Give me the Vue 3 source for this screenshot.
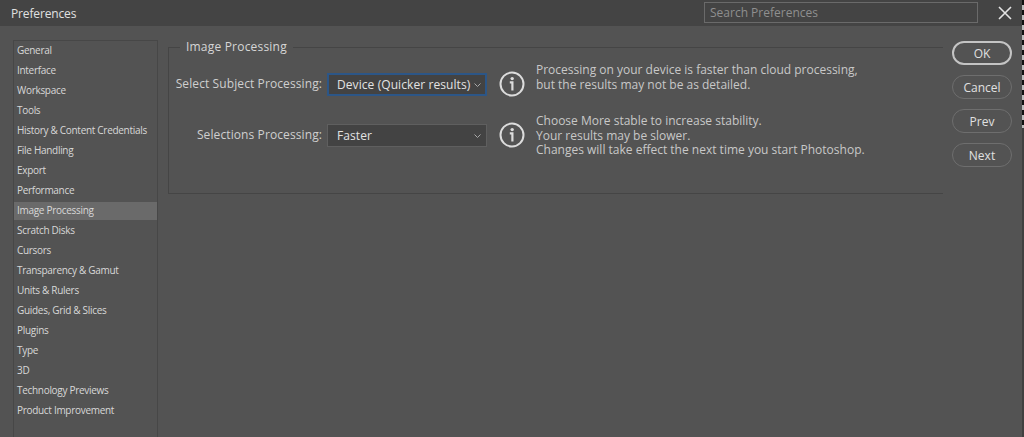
<script setup>
const items = ['General','Interface','Workspace','Tools','History & Content Credentials','File Handling','Export','Performance','Image Processing','Scratch Disks','Cursors','Transparency & Gamut','Units & Rulers','Guides, Grid & Slices','Plugins','Type','3D','Technology Previews','Product Improvement']
const rows = [
  { label: 'Select Subject Processing:', value: 'Device (Quicker results)', focused: true, lines: ['Processing on your device is faster than cloud processing,', 'but the results may not be as detailed.'] },
  { label: 'Selections Processing:', value: 'Faster', focused: false, lines: ['Choose More stable to increase stability.', 'Your results may be slower.', 'Changes will take effect the next time you start Photoshop.'] }
]
const buttons = ['OK','Cancel','Prev','Next']
</script>

<template>
  <div class="dialog">
    <header class="titlebar">
      <span class="title">Preferences</span>
      <div class="search">Search Preferences</div>
      <svg class="close" width="14" height="14" viewBox="0 0 14 14"><path d="M1 1 13 13M13 1 1 13" stroke="#e4e4e4" stroke-width="1.6" fill="none"/></svg>
    </header>
    <main class="body">
      <nav class="nav">
        <div v-for="it in items" :key="it" class="nav-item" :class="{ active: it === 'Image Processing' }">{{ it }}</div>
      </nav>
      <section class="content">
        <div class="group">
          <span class="legend">Image Processing</span>
          <div v-for="(r, i) in rows" :key="r.label" class="row" :class="'row' + i">
            <div class="label">{{ r.label }}</div>
            <div class="select" :class="{ focused: r.focused }">
              <span>{{ r.value }}</span>
              <svg class="chev" width="7" height="4" viewBox="0 0 7 4"><path d="M.5.5 3.5 3.5 6.5.5" stroke="#a8a8a8" fill="none"/></svg>
            </div>
            <svg class="info" width="26" height="26" viewBox="0 0 26 26">
              <circle cx="13" cy="13" r="11.5" stroke="#dcdcdc" stroke-width="2" fill="none"/>
              <circle cx="13.2" cy="7.6" r="1.7" fill="#dcdcdc"/>
              <path d="M10.8 11.3H13.4V19.5" stroke="#dcdcdc" stroke-width="2.2" fill="none"/>
            </svg>
            <div class="help"><div v-for="l in r.lines" :key="l">{{ l }}</div></div>
          </div>
        </div>
      </section>
      <aside class="actions">
        <button v-for="(b, i) in buttons" :key="b" class="btn" :class="{ primary: i === 0 }">{{ b }}</button>
      </aside>
    </main>
    <div class="edge"></div>
  </div>
</template>

<style>
html, body { margin: 0; background: #535353; }
</style>

<style scoped>
.dialog { position: relative; width: 1024px; height: 437px; background: #535353; overflow: hidden; font-family: "Open Sans", "DejaVu Sans", sans-serif; color: #d6d6d6; display: flex; flex-direction: column; }
.edge { position: absolute; top: 0; right: 0; bottom: 0; width: 2px; background: repeating-linear-gradient(to bottom, #111 0 5px, #bdbdbd 5px 10px) top / 2px 128px no-repeat, #404040; }
.titlebar { height: 26px; background: #444444; display: flex; align-items: center; padding-left: 11px; box-sizing: border-box; }
.title { font-size: 12px; letter-spacing: -0.15px; color: #e0e0e0; flex: 1; }
.search { width: 274px; height: 21px; margin-top: -2px; border: 1px solid #6a6a6a; color: #8f8f8f; font-size: 12px; line-height: 20px; padding-left: 5px; box-sizing: border-box; }
.close { margin-left: 20px; margin-right: 12px; }
.body { flex: 1; display: flex; min-height: 0; padding-top: 14px; }
.nav { width: 145px; margin-left: 13px; border: 1px solid #474747; border-bottom: 0; padding-top: 0; flex: none; box-sizing: border-box; margin-right: 10px; }
.nav-item { height: 20px; line-height: 18px; font-size: 10px; letter-spacing: -0.3px; padding-left: 3px; color: #d8d8d8; }
.nav-item.active { background: #6a6a6a; height: 18px; margin: 1px 0; line-height: 16px; }
.content { width: 775px; flex: none; padding-top: 7px; }
.group { position: relative; height: 147px; border: 1px solid #454545; border-right: 0; box-sizing: border-box; }
.legend { position: absolute; left: 11px; top: -9px; background: #535353; padding: 0 6px; font-size: 12px; letter-spacing: 0.2px; line-height: 16px; color: #d6d6d6; }
.row { display: flex; position: absolute; left: 0; right: 0; align-items: flex-start; }
.row0 { top: 25px; }
.row1 { top: 76px; }
.label { width: 153px; text-align: right; font-size: 12px; letter-spacing: 0.1px; line-height: 22px; color: #cfcfcf; }
.select { margin-left: 5px; width: 160px; height: 23px; background: #434343; border: 1px solid #5f5f5f; box-sizing: border-box; display: flex; align-items: center; justify-content: space-between; padding: 0 5px 0 9px; font-size: 12px; letter-spacing: 0.08px; color: #e2e2e2; }
.select.focused { border: 2px solid #2c5687; padding-left: 8px; padding-right: 4px; }
.info { margin-left: 12px; flex: none; margin-top: -2px; }
.help { margin-left: 11px; font-size: 12px; line-height: 14.5px; color: #c8c8c8; margin-top: -10px; }
.actions { margin-left: 9px; padding-top: 1px; display: flex; flex-direction: column; gap: 10px; }
.btn { width: 60px; height: 24px; border-radius: 12px; border: 1.5px solid #6e6e6e; background: transparent; color: #e0e0e0; font: 12px "Open Sans", "DejaVu Sans", sans-serif; padding: 0; }
.btn.primary { border: 2px solid #c4c4c4; }
</style>
